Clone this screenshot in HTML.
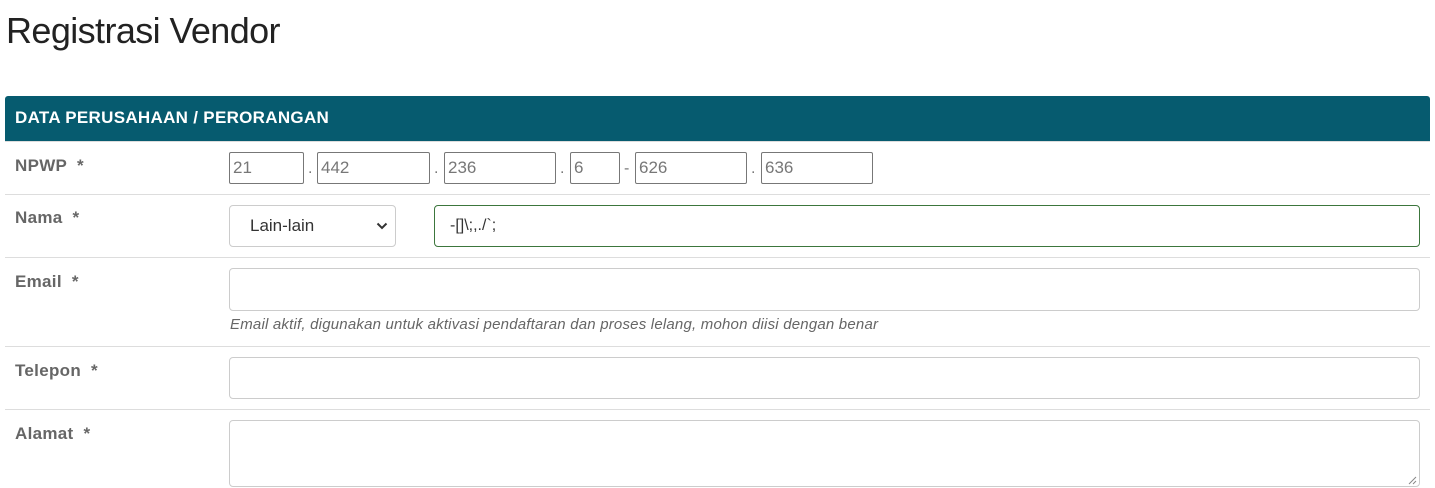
<!DOCTYPE html>
<html><head><meta charset="utf-8">
<style>
*{box-sizing:border-box;margin:0;padding:0}
body{width:1435px;height:488px;background:#fff;font-family:"Liberation Sans",sans-serif;position:relative;overflow:hidden;color:#333}
.abs{position:absolute}
h1{position:absolute;left:6px;top:10px;font-weight:300;font-size:36px;color:#222;letter-spacing:-0.6px}
.bar{left:5px;top:96px;width:1425px;height:45px;background:#065b6f;border-radius:3px 3px 0 0;color:#fff;font-weight:bold;font-size:17px;padding:12px 10px;letter-spacing:0.3px}
.line{left:5px;width:1425px;height:1px;background:#ddd}
.lbl{left:15px;font-weight:bold;font-size:17px;color:#666;letter-spacing:0.3px}
.np{height:32px;border:1px solid #777;border-radius:2px;font-size:17px;color:#777;padding:5px 3px}
.dot{font-size:16px;color:#777}
.inp{left:229px;width:1191px;height:43px;border:1px solid #ccc;border-radius:4px}
.help{left:230px;top:316px;font-style:italic;font-size:15px;color:#666;letter-spacing:0.2px}
</style></head><body>
<h1>Registrasi Vendor</h1>
<div class="abs bar">DATA PERUSAHAAN / PERORANGAN</div>
<div class="abs line" style="top:141px"></div>

<div class="abs lbl" style="top:156px">NPWP &nbsp;*</div>
<div class="abs np" style="left:229px;top:152px;width:75px">21</div>
<div class="abs dot" style="left:308px;top:160px">.</div>
<div class="abs np" style="left:317px;top:152px;width:113px">442</div>
<div class="abs dot" style="left:434px;top:160px">.</div>
<div class="abs np" style="left:444px;top:152px;width:112px">236</div>
<div class="abs dot" style="left:560px;top:160px">.</div>
<div class="abs np" style="left:570px;top:152px;width:50px">6</div>
<div class="abs dot" style="left:624px;top:160px">-</div>
<div class="abs np" style="left:635px;top:152px;width:112px">626</div>
<div class="abs dot" style="left:751px;top:160px">.</div>
<div class="abs np" style="left:761px;top:152px;width:112px">636</div>
<div class="abs line" style="top:194px"></div>

<div class="abs lbl" style="top:208px">Nama &nbsp;*</div>
<div class="abs" style="left:229px;top:205px;width:167px;height:42px;border:1px solid #ccc;border-radius:4px;font-size:17px;color:#333;padding:10px 20px">Lain-lain
<svg class="abs" style="right:7px;top:16px" width="12" height="8" viewBox="0 0 12 8"><path d="M1.5 1.5L6 6L10.5 1.5" stroke="#333" stroke-width="2" fill="none"/></svg></div>
<div class="abs" style="left:434px;top:205px;width:986px;height:42px;border:1px solid #3c763d;border-radius:4px;font-size:16px;color:#333;padding:11px 15px">-[]\;,./`;</div>
<div class="abs line" style="top:257px"></div>

<div class="abs lbl" style="top:272px">Email &nbsp;*</div>
<div class="abs inp" style="top:268px"></div>
<div class="abs help">Email aktif, digunakan untuk aktivasi pendaftaran dan proses lelang, mohon diisi dengan benar</div>
<div class="abs line" style="top:346px"></div>

<div class="abs lbl" style="top:361px">Telepon &nbsp;*</div>
<div class="abs inp" style="top:357px;height:42px"></div>
<div class="abs line" style="top:409px"></div>

<div class="abs lbl" style="top:424px">Alamat &nbsp;*</div>
<div class="abs inp" style="top:420px;height:67px"></div>
<svg class="abs" style="left:1408px;top:476px" width="9" height="9" viewBox="0 0 9 9"><path d="M8 1L1 8M8 5L5 8" stroke="#888" stroke-width="1"/></svg>
</body></html>
